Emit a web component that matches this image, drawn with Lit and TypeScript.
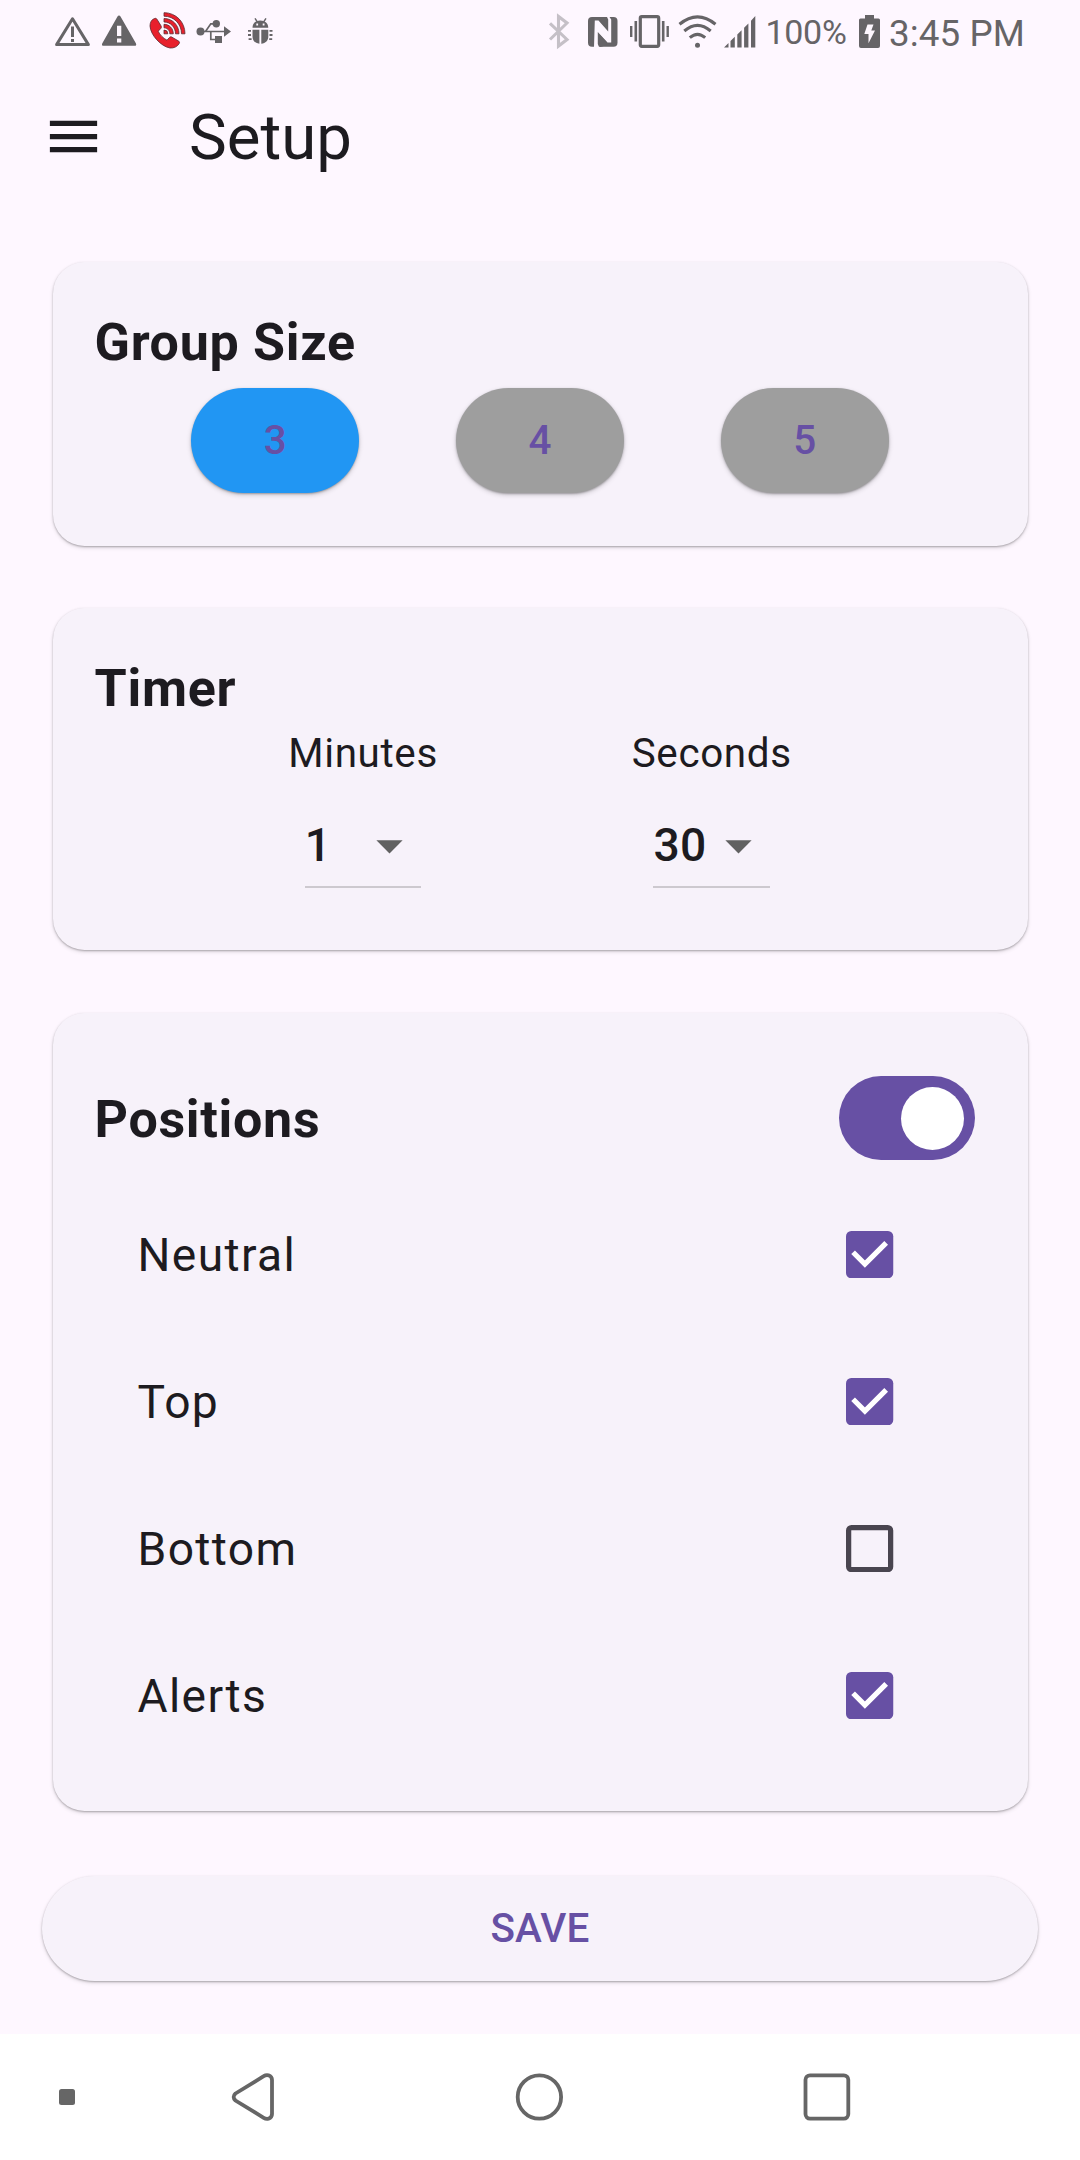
import { LitElement, html, css, svg } from "lit";
import { customElement, property, state } from "lit/decorators.js";
import { classMap } from "lit/directives/class-map.js";

@customElement("status-bar")
class StatusBar extends LitElement {
  static styles = css`
    :host {
      display: flex;
      height: 63px;
      padding-left: 52px;
      color: #666467;
      fill: currentColor;
      font-family: Roboto, sans-serif;
    }
    svg {
      display: block;
      flex: none;
      height: 63px;
    }
    .end {
      display: flex;
      margin-left: 260px;
    }
    .level {
      width: 90px;
      font-size: 34px;
      line-height: 65px;
      letter-spacing: -0.3px;
      padding-left: 3.5px;
      box-sizing: border-box;
      white-space: nowrap;
    }
    .clock {
      font-size: 36.75px;
      line-height: 67px;
      letter-spacing: 0.1px;
      padding-left: 3px;
      white-space: nowrap;
    }
  `;

  private glyph(x: number, width: number, body: unknown) {
    return html`<svg width=${width} height="63" viewBox="${x} 0 ${width} 63">${body}</svg>`;
  }

  render() {
    return html`
      ${this.glyph(52, 44, svg`
        <path d="M72.5 18.8 56.6 44.6H88.400Z" fill="none" stroke="currentColor" stroke-width="3" stroke-linejoin="round"/>
        <path d="M71 26.500h3V37h-3zM71 39h3v3h-3z"/>`)}
      ${this.glyph(96, 46, svg`
        <path fill-rule="evenodd" d="M119 15.500q.9 0 1.500 1L136 43.500q.8 2.300-1.300 2.300H103.500q-2.100 0-1.300-2.300L117.500 16.500q.6-1 1.500-1ZM117 25.700V36h4.300V25.700ZM117 38.400v4h4.300v-4Z"/>`)}
      ${this.glyph(142, 48, svg`
        <g fill="#e8202c" stroke="#5a2a30" stroke-width=".8">
          <path d="M154.500 18.500c-3 1-4.500 4-4.500 7.500.5 9 11 20.500 20 22 4 .3 7.500-1.500 9.200-4.500.6-1.200.3-1.900-.7-2.500l-6.500-3.800c-1.200-.6-2-.4-2.800.5l-2.200 2.500c-3.800-2-7.200-5.300-8.800-9l2.500-2.600c.8-.9.9-1.700.3-2.800l-4-6.500c-.6-.9-1.400-1.200-2.500-.8Z"/>
          <path d="M164 12.700C176 12.700 185 22 185 33.800H181.500C181.500 24 174 16.200 164 16.200ZM164 18.500C172.500 18.500 179 25.300 179 33.800H175.500C175.500 27.200 170.500 22 164 22ZM164 24.300C169.300 24.300 173.300 28.500 173.300 33.800H169.800C169.800 30.400 167.300 27.800 164 27.800Z"/>
          <path d="M164 30a3.800 3.800 0 0 1 3.800 3.800H164Z"/>
        </g>`)}
      ${this.glyph(190, 50, svg`
        <circle cx="200.500" cy="31.500" r="4"/><circle cx="216.300" cy="23.800" r="3.700"/>
        <path d="M224 26.300 231 31.500 224 36.700ZM215 36h7v7h-7z"/>
        <path d="M200 31.500H225M205.500 31.500 210.800 23.800H216M210.800 31.500V39.500H216" fill="none" stroke="currentColor" stroke-width="1.700"/>`)}
      ${this.glyph(240, 40, svg`
        <path fill-rule="evenodd" d="M252.500 27.800C252.500 23.500 255.500 20.600 260.300 20.600S268.300 23.500 268.300 27.800ZM256.300 23.600v1.800h1.800v-1.800ZM262.700 23.600v1.800h1.800v-1.800Z"/>
        <path d="M252.500 29.700H259.400V43.700C255 43.300 252.500 40.500 252.500 36.500ZM261.300 29.700H268.300V36.500C268.300 40.500 265.700 43.300 261.300 43.700ZM248 30h3v1.800h-3zM248 34.100h3v1.800h-3zM248.600 38.200h3V40h-3zM269.500 30h3v1.800h-3zM269.500 34.100h3v1.800h-3zM269.200 38.200h3V40h-3z"/>
        <path d="M257.300 21.800 255 18.300M263.700 21.800 266 18.300" stroke="currentColor" stroke-width="1.500"/>`)}
      <div class="end">
        ${this.glyph(540, 40, svg`
          <path d="M550 23.300 567 39.500 558.500 46V16.500L567 23 550 39.500" fill="none" stroke="#c5c0c7" stroke-width="3.100"/>`)}
        ${this.glyph(580, 44, svg`
          <rect x="588" y="17" width="29.500" height="29.800" rx="4"/>
          <path d="M594 47 594.800 20.500H598.500L608.200 31.500V19.500L607 17H609.500L611.200 19.500V42.500H607.500L597.800 32V44L599 47Z" fill="#fef7ff"/>
          <path d="M599.700 47V34.500L607 42.500V43.500Q603 47 599.700 47ZM606.300 17V28.500L599.500 20.700Q603 17 606.300 17Z"/>`)}
        ${this.glyph(624, 50, svg`
          <rect x="640.300" y="16.700" width="18.400" height="29.600" rx="1.500" fill="none" stroke="currentColor" stroke-width="3.200"/>
          <path d="M634.500 21h2.600v20.500h-2.600zM630 26h2.400v11H630zM661.900 21h2.600v20.500h-2.600zM666.500 26h2.400v11h-2.400z"/>`)}
        ${this.glyph(674, 46, svg`
          <path d="M679.500 24.300Q697.500 9.500 715.500 24.300M684.300 31Q697.500 19.800 710.700 31M689.800 37.700Q697.500 31 705.200 37.700" fill="none" stroke="currentColor" stroke-width="3.100"/>
          <circle cx="697.500" cy="45.300" r="2.500"/>`)}
        ${this.glyph(720, 42, svg`
          <path d="M724 47.500 728.500 43V47.500ZM730.500 41 734.800 36.800V47.500H730.500ZM737.300 34.500 741.600 30.300V47.500H737.300ZM744.100 27.800 748.400 23.500V47.500H744.100ZM751 20.800 755.300 16V47.500H751Z"/>`)}
        <div class="level">100%</div>
        ${this.glyph(852, 34, svg`
          <path fill-rule="evenodd" d="M865 15h9v3.500h4.500q1.500 0 1.500 1.500V46q0 2-2 2H861q-2 0-2-2V20q0-1.500 1.500-1.500H865ZM867.500 24.500 864.300 34H868.500V43.200L875 30.500H871.300L873.500 24.500Z"/>`)}
        <div class="clock">3:45 PM</div>
      </div>
    `;
  }
}

@customElement("app-checkbox")
class AppCheckbox extends LitElement {
  @property({ type: Boolean }) checked = false;

  static styles = css`
    :host {
      display: grid;
      place-items: center;
      width: 126px;
      height: 126px;
    }
    svg {
      display: block;
    }
  `;

  render() {
    return html`<svg width="47.25" height="47.25" viewBox="0 0 18 18">
      ${this.checked
        ? svg`<rect width="18" height="18" rx="2" fill="#6750a4"/>
            <path d="M2.700 8.100 7.200 12.600 15.300 4.500" fill="none" stroke="#fff" stroke-width="2"/>`
        : svg`<rect x="1" y="1" width="16" height="16" rx="1.100" fill="none" stroke="#49454f" stroke-width="2"/>`}
    </svg>`;
  }
}

@customElement("nav-bar")
class NavBar extends LitElement {
  static styles = css`
    :host {
      display: flex;
      height: 126px;
      background: #fff;
      fill: none;
      stroke: #666;
      stroke-width: 3.8px;
    }
    svg {
      display: block;
      flex: none;
    }
    .dot {
      fill: #666;
      stroke: none;
    }
  `;

  render() {
    return html`
      <svg width="134" height="126"><rect class="dot" x="59" y="55" width="16" height="16" rx="2.500"/></svg>
      <svg width="262" height="126" viewBox="134 0 262 126">
        <path d="M235.500 59.500 263.700 42.200Q266 40.700 268.500 41.300 272 42.500 272 46V80Q272 83.500 268.500 84.700 266 85.300 263.700 83.800L235.500 66.500Q231.800 63 235.500 59.500Z"/>
      </svg>
      <svg width="288" height="126" viewBox="396 0 288 126"><circle cx="539.400" cy="63" r="21.700"/></svg>
      <svg width="288" height="126" viewBox="684 0 288 126">
        <rect x="805.500" y="41.300" width="42.800" height="43.300" rx="4.500"/>
      </svg>
    `;
  }
}

@customElement("app-root")
class AppRoot extends LitElement {
  @state() private groupSize = 3;
  @state() private positionsOn = true;
  @state() private positions = [
    { name: "Neutral", on: true },
    { name: "Top", on: true },
    { name: "Bottom", on: false },
    { name: "Alerts", on: true },
  ];

  static styles = css`
    :host {
      display: flex;
      flex-direction: column;
      height: 2160px;
      background: #fef7ff;
      color: #1d1b20;
      font-family: Roboto, sans-serif;
    }
    button {
      border: 0;
      padding: 0;
      font: inherit;
      color: inherit;
      background: none;
    }
    .appbar {
      display: flex;
      align-items: center;
      height: 147px;
      padding-left: 42px;
      gap: 84px;
    }
    .menu {
      display: block;
      width: 63px;
      height: 63px;
    }
    .appbar h1 {
      margin: 0;
      padding-top: 2px;
      font-size: 63.5px;
      font-weight: 400;
      line-height: 145px;
    }
    main {
      flex: 1;
      display: flex;
      flex-direction: column;
      padding: 52px 42px 0;
    }
    .card {
      box-sizing: border-box;
      margin: 0 10.5px 63px;
      padding: 42px;
      border-radius: 31.5px;
      background: #f7f2fa;
      box-shadow: 0 1px 2px rgba(0, 0, 0, 0.26), 0 2px 4px rgba(0, 0, 0, 0.12);
    }
    .size {
      height: 284px;
      margin-bottom: 62px;
    }
    .timer {
      height: 342px;
    }
    .positions {
      height: 798px;
      margin-bottom: 65px;
    }
    h2 {
      margin: 0;
      height: 73.500px;
      font-size: 52px;
      font-weight: 700;
      line-height: 77px;
      letter-spacing: 0.7px;
    }
    .sizes {
      display: flex;
      justify-content: space-evenly;
      align-items: center;
      height: 126px;
    }
    .pill {
      height: 105px;
      border-radius: 52.5px;
      font-size: 40.4px;
      font-weight: 500;
      line-height: 104px;
      letter-spacing: 0.1px;
      color: #6750a4;
      box-shadow: 0 1px 2px rgba(0, 0, 0, 0.26), 0 2px 5px rgba(0, 0, 0, 0.18);
    }
    .choice {
      width: 168px;
      background: #9e9e9e;
    }
    .chosen {
      background: #2196f3;
    }
    .pickers {
      display: flex;
      justify-content: space-evenly;
    }
    .picker {
      display: flex;
      flex-direction: column;
      align-items: center;
    }
    .caption {
      height: 58.5px;
      font-size: 40.4px;
      line-height: 59px;
      letter-spacing: 0.65px;
    }
    .select {
      display: flex;
      justify-content: space-between;
      align-items: center;
      box-sizing: border-box;
      width: 116.500px;
      height: 84px;
      margin: 22px 0 20px;
      border-bottom: 2px solid #cdc9cf;
      font-size: 46.2px;
      font-weight: 500;
      letter-spacing: 0.4px;
    }
    .arrow {
      display: block;
      width: 63px;
      height: 63px;
      margin-left: -10px;
    }
    .head {
      display: flex;
      align-items: center;
      justify-content: space-between;
      height: 126px;
      padding-right: 10.5px;
    }
    .switch {
      display: flex;
      align-items: center;
      justify-content: flex-start;
      box-sizing: border-box;
      width: 136.5px;
      height: 84px;
      padding: 0 11px;
      border-radius: 42px;
      background: #6750a4;
    }
    .switch.on {
      justify-content: flex-end;
    }
    .thumb {
      width: 63px;
      height: 63px;
      border-radius: 50%;
      background: #fff;
    }
    .row {
      display: flex;
      align-items: center;
      justify-content: space-between;
      height: 147px;
      padding: 0 52.5px 0 43px;
      font-size: 46.2px;
      letter-spacing: 1.35px;
    }
    .save {
      width: 100%;
      background: #f7f2fa;
      box-shadow: 0 1px 2px rgba(0, 0, 0, 0.26), 0 2px 4px rgba(0, 0, 0, 0.12);
    }
  `;

  private toggle(index: number) {
    this.positions = this.positions.map((p, i) => (i === index ? { ...p, on: !p.on } : p));
  }

  private picker(label: string, value: string) {
    return html`<div class="picker">
      <div class="caption">${label}</div>
      <div class="select">
        <span>${value}</span>
        <svg class="arrow" viewBox="0 0 24 24"><path d="M7 10l5 5 5-5z" fill="#616161" /></svg>
      </div>
    </div>`;
  }

  render() {
    return html`
      <status-bar></status-bar>
      <header class="appbar">
        <svg class="menu" viewBox="0 0 24 24" fill="#1d1b20">
          <path d="M3 18h18v-2H3v2zm0-5h18v-2H3v2zm0-7v2h18V6H3z" />
        </svg>
        <h1>Setup</h1>
      </header>
      <main>
        <section class="card size">
          <h2>Group Size</h2>
          <div class="sizes">
            ${[3, 4, 5].map(
              (n) => html`<button
                class=${classMap({ pill: true, choice: true, chosen: n === this.groupSize })}
                @click=${() => (this.groupSize = n)}
              >${n}</button>`
            )}
          </div>
        </section>
        <section class="card timer">
          <h2>Timer</h2>
          <div class="pickers">${this.picker("Minutes", "1")} ${this.picker("Seconds", "30")}</div>
        </section>
        <section class="card positions">
          <div class="head">
            <h2>Positions</h2>
            <button
              class=${classMap({ switch: true, on: this.positionsOn })}
              @click=${() => (this.positionsOn = !this.positionsOn)}
            ><span class="thumb"></span></button>
          </div>
          ${this.positions.map(
            (p, i) => html`<div class="row">
              <span>${p.name}</span>
              <app-checkbox ?checked=${p.on} @click=${() => this.toggle(i)}></app-checkbox>
            </div>`
          )}
        </section>
        <button class="pill save">SAVE</button>
      </main>
      <nav-bar></nav-bar>
    `;
  }
}
